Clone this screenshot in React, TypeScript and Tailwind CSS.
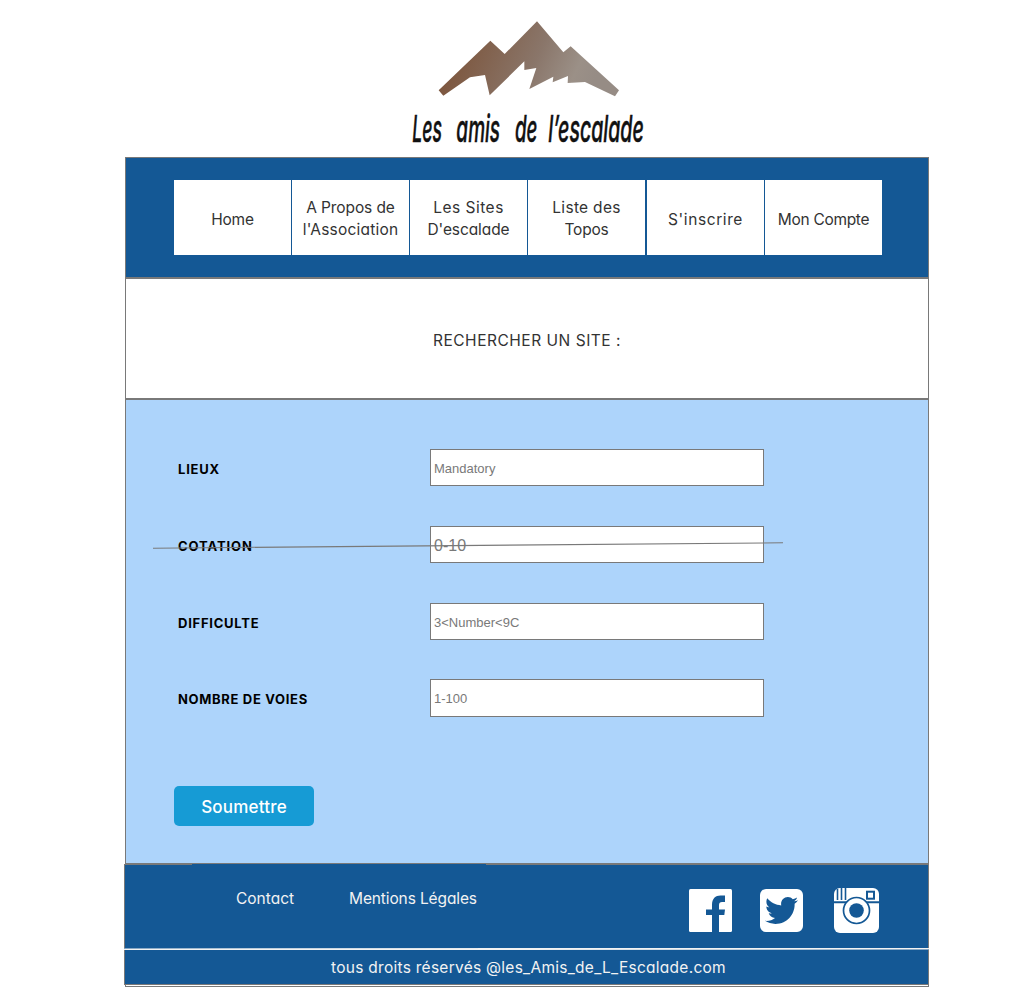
import React from "react";
import { FaTwitter } from "react-icons/fa";

const navItems = [
  { lines: ["Home"], cls: "w-[117px] pt-1", text: ["tracking-[-0.2px]"] },
  { lines: ["A Propos de", "l'Association"], cls: "w-[117px] ml-px pt-0.5", text: ["tracking-[-0.1px]", "tracking-[0.2px]"] },
  { lines: ["Les Sites", "D'escalade"], cls: "w-[117px] ml-px pt-0.5", text: ["tracking-[0.5px]", "tracking-[-0.1px]"] },
  { lines: ["Liste des", "Topos"], cls: "w-[117px] ml-px pt-0.5", text: ["tracking-[0.3px]", "tracking-[-0.2px]"] },
  { lines: ["S'inscrire"], cls: "w-[117px] ml-0.5 pt-1", text: ["tracking-[0.6px]"] },
  { lines: ["Mon Compte"], cls: "w-[117px] ml-px pt-1", text: ["tracking-[-0.3px]"] },
];

const fields = [
  { label: "LIEUX", placeholder: "Mandatory", row: "mt-[49px]", box: "h-[37px] pt-[2px]", text: "text-[13px]", track: "tracking-[0.8px] pt-[3px]" },
  { label: "COTATION", placeholder: "0-10", row: "mt-10", box: "h-[37px] pt-[2px]", text: "text-[16px]", track: "tracking-[0.9px] pt-[3px]" },
  { label: "DIFFICULTE", placeholder: "3<Number<9C", row: "mt-10", box: "h-[37px] pt-[2px]", text: "text-[13px]", track: "tracking-[0.75px] pt-[3px]" },
  { label: "NOMBRE DE VOIES", placeholder: "1-100", row: "mt-[39px]", box: "h-[38px] pt-px", text: "text-[13px]", track: "tracking-[0.67px] pt-[1px]" },
];

function Logo() {
  return (
    <svg className="ml-[400px] mt-[10px] block h-[147px] w-[260px]" viewBox="0 0 780 441">
      <defs>
        <linearGradient id="rock" x1="190" y1="90" x2="560" y2="260" gradientUnits="userSpaceOnUse">
          <stop offset="0" stopColor="#7d573f" />
          <stop offset="0.55" stopColor="#8a766a" />
          <stop offset="0.85" stopColor="#9b9087" />
          <stop offset="1" stopColor="#968c85" />
        </linearGradient>
      </defs>
      <path
        d="M116 241 L271 92 L314 132 L411 34 L490 127 L512 109 L657 241 L645 259 L555 216 L503 219 L504 198 L458 217 L460 200 L388 237 L409 174 L373 180 L373 154 L269 256 L255 195 L210 202 L130 257 Z"
        fill="url(#rock)"
      />
      <g
        transform="scale(0.56 1)"
        fill="#111"
        stroke="#111"
        strokeWidth="1.5"
        fontFamily="'Comic Sans MS', Inter, sans-serif"
        fontSize="112"
        fontStyle="italic"
        fontWeight="500"
        style={{ fontFeatureSettings: "'cv11'" }}
      >
        <text x="66" y="397" textLength="159" lengthAdjust="spacingAndGlyphs">Les</text>
        <text x="302" y="397" textLength="234" lengthAdjust="spacingAndGlyphs">amis</text>
        <text x="616" y="397" textLength="120" lengthAdjust="spacingAndGlyphs">de</text>
        <text x="794" y="397" textLength="512" lengthAdjust="spacingAndGlyphs">l’escalade</text>
      </g>
    </svg>
  );
}

function FacebookIcon() {
  return (
    <svg className="mt-px block size-[43px]" viewBox="0 0 43 43">
      <rect width="43" height="43" rx="1.5" fill="#fff" />
      <path d="M23 43V26H17V20.5H23V16C23 9.5 26.5 6.5 31.5 6.5H36V13H33C31 13 30 14 30 16V20.5H36L35.3 26H30V43Z" fill="#145895" />
    </svg>
  );
}

function InstagramIcon() {
  return (
    <svg className="ml-[31px] block size-[45px]" viewBox="0 0 45 45">
      <rect width="45" height="45" rx="6" fill="#fff" />
      <path d="M3.5 1V12M7.5 0V12M11.5 0V12" stroke="#145895" strokeWidth="1.6" />
      <path d="M0 14.2H45" stroke="#145895" strokeWidth="2" />
      <rect x="33" y="3.7" width="7" height="7" fill="#fff" stroke="#145895" strokeWidth="2" />
      <circle cx="22.5" cy="22.5" r="13" fill="#fff" stroke="#145895" strokeWidth="1.7" />
      <circle cx="22.5" cy="22.5" r="7.3" fill="#145895" />
    </svg>
  );
}

export default function App() {
  return (
    <div className="flex h-[987px] w-[1024px] flex-col overflow-hidden bg-white font-['Comic_Sans_MS',Inter,sans-serif] [font-feature-settings:'cv11']">
      <Logo />

      <header className="ml-[125px] flex h-[121px] w-[804px] border border-[#797979] bg-[#145895] pl-12 pt-[22px]">
        {navItems.map((item) => (
          <a
            key={item.lines[0]}
            className={`flex h-[75px] flex-col items-center justify-center whitespace-nowrap bg-white text-[15.5px] leading-[22px] text-[#333] ${item.cls}`}
          >
            {item.lines.map((line, i) => (
              <span key={line} className={item.text[i]}>{line}</span>
            ))}
          </a>
        ))}
      </header>

      <section className="ml-[125px] flex h-[121px] w-[804px] items-center justify-center border border-[#797979] bg-white pt-1">
        <h1 className="whitespace-nowrap text-[15.5px] leading-[22px] tracking-[0.52px] text-[#333]">RECHERCHER UN SITE :</h1>
      </section>

      <form className="relative ml-[125px] flex h-[465px] w-[804px] flex-col border border-[#797979] bg-[#add4fb]">
        {fields.map((field) => (
          <div key={field.label} className={`flex shrink-0 items-center ${field.row}`}>
            <label className={`ml-[52px] w-[252px] whitespace-nowrap text-[13px] font-bold leading-[18px] text-black ${field.track}`}>
              {field.label}
            </label>
            <input
              placeholder={field.placeholder}
              className={`w-[334px] border border-[#797979] bg-white pl-[3px] font-['Liberation_Sans',Arial,sans-serif] placeholder:text-[#797979] ${field.box} ${field.text}`}
            />
          </div>
        ))}
        <button type="button" className="ml-12 mt-[69px] h-10 w-[140px] shrink-0 rounded-[5px] bg-[#169bd5] pt-[3px] text-[17px] font-medium tracking-[0.2px] text-white">
          Soumettre
        </button>
        <svg className="absolute left-[27px] top-[141px] h-2 w-[631px]" viewBox="0 0 631 8">
          <path d="M0 7.2L630 1.8" stroke="#797979" strokeWidth="1.1" />
        </svg>
      </form>

      <footer className="ml-[124px] flex w-[805px] flex-col">
        <div className="flex h-[84px] border-x border-[#797979] bg-[#145895]">
          <div className="h-px w-[67px] shrink-0 bg-[#797979]" />
          <nav className="flex w-[294px] shrink-0 pl-11 pt-[24px] text-[15.5px] leading-[22px] text-[#f2f2f2]">
            <a className="w-[113px] whitespace-nowrap">Contact</a>
            <a className="whitespace-nowrap tracking-[-0.12px]">Mentions Légales</a>
          </nav>
          <div className="flex flex-1 border-t border-[#797979] pl-[203px] pt-[23px]">
            <FacebookIcon />
            <div className="ml-7 mt-px flex size-[43px] items-center justify-center rounded-[6px] bg-white text-[#145895]">
              <FaTwitter size={33} />
            </div>
            <InstagramIcon />
          </div>
        </div>
        <svg className="block h-[2px] w-[805px] bg-[#145895]" viewBox="0 0 805 2">
          <path d="M0 1.4L805 0.6" stroke="#f2f2f2" strokeWidth="1.8" />
        </svg>
        <div className="flex h-[35px] items-center justify-center border-x border-b border-[#797979] bg-[#145895] pl-1 pt-0.5 text-[15.5px] tracking-[0.27px] text-[#f2f2f2]">
          tous droits réservés @les_Amis_de_L_Escalade.com
        </div>
        <div className="ml-px h-[2px] border-x border-b border-[#797979]" />
      </footer>
    </div>
  );
}
